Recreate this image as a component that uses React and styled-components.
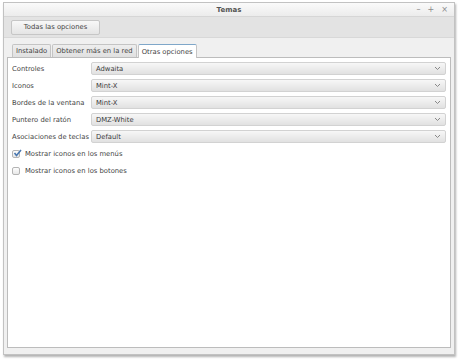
import React from 'react';
import styled, { createGlobalStyle } from 'styled-components';

const GlobalStyle = createGlobalStyle`
  html, body {
    margin: 0;
    padding: 0;
    background: #ffffff;
  }
  body {
    font-family: "DejaVu Sans", "Liberation Sans", sans-serif;
    font-size: 6.8px;
    color: #444;
  }
`;

const Screen = styled.div`
  width: 460px;
  height: 360px;
  padding: 2px 0 0 3px;
  box-sizing: border-box;
`;

const Window = styled.div`
  width: 452px;
  height: 353px;
  box-sizing: border-box;
  border: 1px solid #c2c2c2;
  box-shadow: 1px 2px 2px rgba(0, 0, 0, 0.3);
  display: flex;
  flex-direction: column;
  background: #efefef;
`;

const TitleBar = styled.div`
  height: 13px;
  display: grid;
  grid-template-columns: 1fr auto 1fr;
  align-items: center;
  background: linear-gradient(#fafafa, #ececec);
  border-bottom: 1px solid #d6d6d6;
`;

const Title = styled.div`
  grid-column: 2;
  font-weight: bold;
  font-size: 7px;
  color: #555;
`;

const Controls = styled.div`
  display: flex;
  justify-content: flex-end;
  gap: 7px;
  padding-right: 6px;
  color: #8a8a8a;
  font-size: 8px;
`;

const Toolbar = styled.div`
  height: 20px;
  display: flex;
  align-items: center;
  padding-left: 7px;
  background: #e3e3e3;
  border-bottom: 1px solid #d8d8d8;
`;

const Button = styled.div`
  width: 89px;
  height: 15px;
  box-sizing: border-box;
  display: flex;
  align-items: center;
  justify-content: center;
  border: 1px solid #c6c6c6;
  border-radius: 2px;
  background: linear-gradient(#f8f8f8, #e4e4e4);
  color: #444;
`;

const Body = styled.div`
  flex: 1;
  display: flex;
  flex-direction: column;
  padding: 5px 3px 6px 3px;
  background: #f0f0f0;
`;

const Tabs = styled.div`
  display: flex;
  align-items: flex-end;
  padding-left: 5px;
  height: 14px;
`;

const Tab = styled.div`
  height: ${p => (p.active ? '14px' : '13px')};
  box-sizing: border-box;
  padding: 0 3px;
  display: flex;
  align-items: center;
  border: 1px solid #c4c4c4;
  border-bottom: none;
  border-top: 1px solid ${p => (p.active ? '#7fa7c9' : '#c4c4c4')};
  border-radius: 2px 2px 0 0;
  margin-right: 1px;
  background: ${p => (p.active ? '#ffffff' : 'linear-gradient(#eeeeee, #e0e0e0)')};
  color: #444;
  margin-bottom: ${p => (p.active ? '-1px' : '0')};
  position: relative;
  z-index: ${p => (p.active ? 1 : 0)};
`;

const Panel = styled.div`
  flex: 1;
  background: #ffffff;
  border: 1px solid #bcbcbc;
  padding: 4px 4px 0 4px;
  display: flex;
  flex-direction: column;
  gap: 4px;
`;

const Row = styled.div`
  display: flex;
  align-items: center;
  height: 13px;
`;

const Label = styled.div`
  width: 79px;
  color: #444;
  white-space: nowrap;
`;

const Combo = styled.div`
  flex: 1;
  height: 13px;
  box-sizing: border-box;
  display: flex;
  align-items: center;
  justify-content: space-between;
  padding: 0 4px 0 4px;
  border: 1px solid #d2d2d2;
  border-radius: 2px;
  background: linear-gradient(#f7f7f7, #e1e1e1);
  color: #3c3c3c;
`;

const CheckRow = styled.div`
  display: flex;
  align-items: center;
  gap: 5px;
  height: 13px;
  color: #444;
`;

const Box = styled.div`
  width: 8px;
  height: 8px;
  box-sizing: border-box;
  border: 1px solid #b4b4b4;
  border-radius: 2px;
  background: linear-gradient(#fdfdfd, #e8e8e8);
  position: relative;
`;

const Chevron = () => (
  <svg width="7" height="5" viewBox="0 0 7 5">
    <path d="M1 1 L3.5 3.5 L6 1" fill="none" stroke="#888" strokeWidth="1" />
  </svg>
);

const Check = () => (
  <svg width="9" height="8" viewBox="0 0 9 8" style={{ position: 'absolute', left: 0, top: -2 }}>
    <path d="M1.5 4 L3.5 6.5 L8 1" fill="none" stroke="#4a78b0" strokeWidth="1.6" />
  </svg>
);

const rows = [
  ['Controles', 'Adwaita'],
  ['Iconos', 'Mint-X'],
  ['Bordes de la ventana', 'Mint-X'],
  ['Puntero del ratón', 'DMZ-White'],
  ['Asociaciones de teclas', 'Default'],
];

export default function App() {
  return (
    <Screen>
      <GlobalStyle />
      <Window>
        <TitleBar>
          <Title>Temas</Title>
          <Controls>
            <span>–</span>
            <span>+</span>
            <span>×</span>
          </Controls>
        </TitleBar>
        <Toolbar>
          <Button>Todas las opciones</Button>
        </Toolbar>
        <Body>
          <Tabs>
            <Tab>Instalado</Tab>
            <Tab>Obtener más en la red</Tab>
            <Tab active>Otras opciones</Tab>
          </Tabs>
          <Panel>
            {rows.map(([label, value]) => (
              <Row key={label}>
                <Label>{label}</Label>
                <Combo>
                  <span>{value}</span>
                  <Chevron />
                </Combo>
              </Row>
            ))}
            <CheckRow>
              <Box>
                <Check />
              </Box>
              Mostrar iconos en los menús
            </CheckRow>
            <CheckRow>
              <Box />
              Mostrar iconos en los botones
            </CheckRow>
          </Panel>
        </Body>
      </Window>
    </Screen>
  );
}
